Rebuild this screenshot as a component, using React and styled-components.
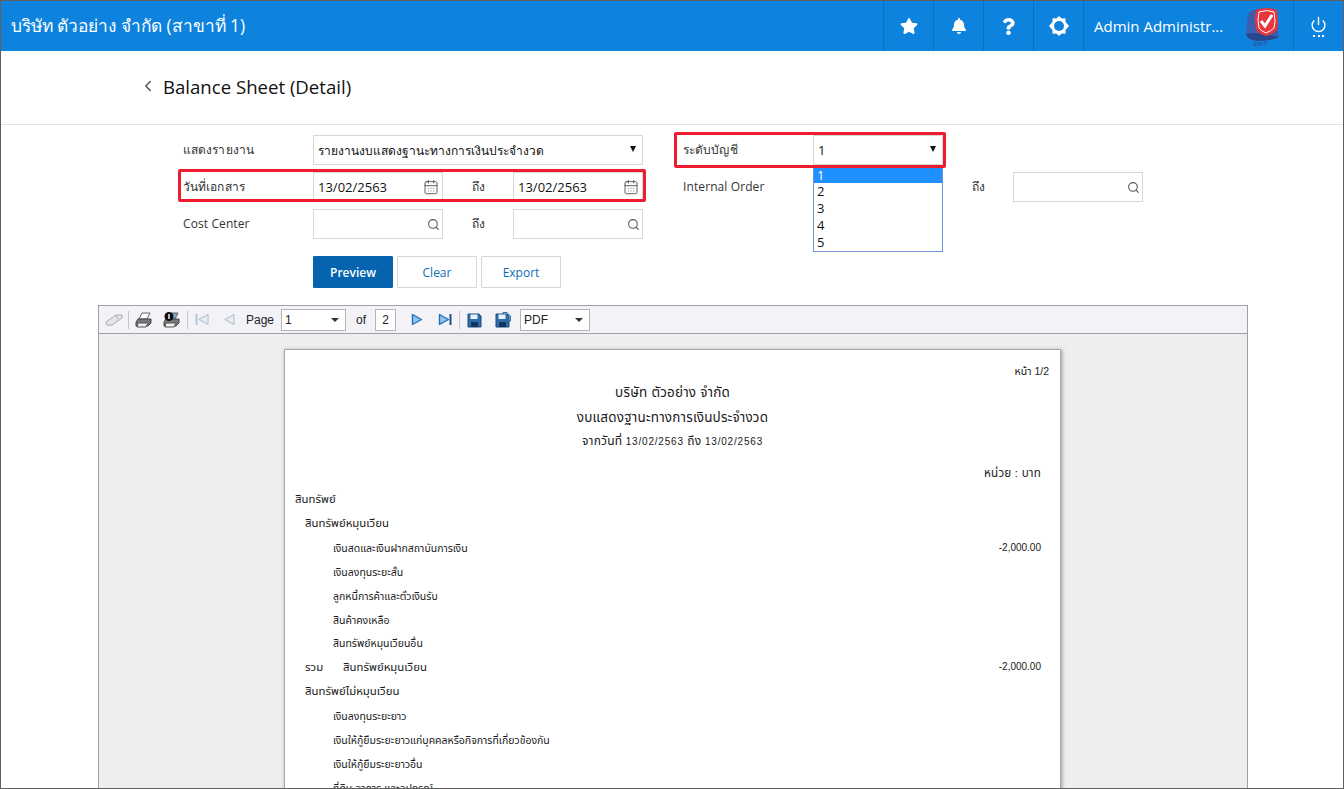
import React from 'react';
import styled, { createGlobalStyle } from 'styled-components';
import { FaStar, FaBell, FaQuestion } from 'react-icons/fa';
import { Search, CalendarDays, Power, ChevronLeft } from 'lucide-react';

const Global = createGlobalStyle`
  html, body { margin: 0; padding: 0; background: #fff; }
  body { font-family: "Open Sans", "Noto Sans", sans-serif; }
  * { box-sizing: border-box; }
`;

const Shell = styled.div`
  width: 1344px;
  height: 789px;
  border: 1px solid #5f5f5f;
  display: flex;
  flex-direction: column;
  overflow: hidden;
  background: #fff;
`;

const Header = styled.header`
  height: 50px;
  flex: none;
  background: #0e83de;
  color: #fff;
  display: flex;
  align-items: center;
`;

const Brand = styled.div`
  flex: 1;
  padding-left: 10px;
  font-size: 17.3px;
`;

const HeadCell = styled.div`
  width: 50px;
  height: 50px;
  border-left: 1px solid #0b6fbe;
  display: flex;
  align-items: center;
  justify-content: center;
`;

const UserCell = styled.div`
  width: 210px;
  height: 50px;
  border-left: 1px solid #0b6fbe;
  padding: 0 10px;
  display: flex;
  align-items: center;
  justify-content: space-between;
  font-size: 15px;
`;

const LogoWrap = styled.div`
  position: relative;
  width: 38px;
  height: 50px;
  span {
    position: absolute;
    left: 8px;
    top: 40px;
    font: 700 5px "Liberation Sans", sans-serif;
    color: #2c4f9a;
    letter-spacing: 0.2px;
  }
`;

const PowerWrap = styled.div`
  display: flex;
  flex-direction: column;
  align-items: center;
  gap: 2px;
  span { width: 11px; border-top: 2px dotted #fff; }
`;

const TitleBar = styled.div`
  height: 74px;
  flex: none;
  border-bottom: 1px solid #e2e2e2;
  padding: 0 0 3px 138px;
  display: flex;
  align-items: center;
  gap: 6px;
  color: #555;
  h1 { margin: 0; font-size: 18.6px; font-weight: 400; color: #111; }
`;

const FormArea = styled.section`
  position: relative;
  flex: none;
  padding: 10px 0 0 182px;
`;

const FormGrid = styled.div`
  display: grid;
  grid-template-columns: 130px 130px 70px 130px 40px 130px 130px 70px 130px;
  grid-auto-rows: 30px;
  row-gap: 7px;
  align-items: center;
  font-size: 12px;
  color: #333;
`;

const Label = styled.div`
  grid-column: ${(p) => p.$col};
  margin-top: -2px;
  letter-spacing: 0.1px;
`;

const Until = styled.div`
  grid-column: ${(p) => p.$col};
  text-align: center;
  margin-left: 1px;
  margin-top: -1px;
`;

const Field = styled.div`
  grid-column: ${(p) => p.$col};
  height: 30px;
  border: 1px solid #d8d8d8;
  background: #fff;
  display: flex;
  align-items: center;
  justify-content: ${(p) => (p.$end ? 'flex-end' : 'space-between')};
  padding: 0 ${(p) => (p.$end ? 2 : 3)}px 0 4px;
  font-size: 13px;
  color: #111;
  svg { color: #555; flex: none; }
`;

const ThaiValue = styled.span`
  font-size: 12px;
`;

const Arrow = styled.i`
  width: 0;
  height: 0;
  border-left: 3.5px solid transparent;
  border-right: 3.5px solid transparent;
  border-top: 6px solid #111;
  margin: -2px 3px 0 0;
`;

const Actions = styled.div`
  display: flex;
  gap: 4px;
  margin: 17px 0 0 130px;
`;

const Btn = styled.button`
  width: 80px;
  height: 32px;
  border-radius: 1px;
  font: 400 12px "Open Sans", sans-serif;
  font-weight: ${(p) => (p.$primary ? 600 : 400)};
  color: ${(p) => (p.$primary ? '#fff' : '#0b6cb8')};
  background: ${(p) => (p.$primary ? '#0563b0' : '#fff')};
  border: 1px solid ${(p) => (p.$primary ? '#0563b0' : '#d8d8d8')};
`;

const RedBox = styled.div`
  position: absolute;
  left: ${(p) => p.$x}px;
  top: ${(p) => p.$y}px;
  width: ${(p) => p.$w}px;
  height: ${(p) => p.$h}px;
  border: 3px solid #ee1c2e;
  border-radius: 2px;
  pointer-events: none;
`;

const ListBox = styled.ul`
  position: absolute;
  left: 812px;
  top: 41px;
  width: 130px;
  height: 86px;
  margin: 0;
  padding: 1px 0 0;
  list-style: none;
  background: #fff;
  border: 1px solid #6f94d8;
  font-size: 13px;
  color: #111;
`;

const ListItem = styled.li`
  height: ${(p) => (p.$on ? 15 : 16.9)}px;
  line-height: ${(p) => (p.$on ? 15 : 16.9)}px;
  padding-left: 3px;
  background: ${(p) => (p.$on ? '#1e90ff' : 'transparent')};
  color: ${(p) => (p.$on ? '#fff' : '#111')};
`;

const Viewer = styled.div`
  flex: 1;
  min-height: 0;
  margin: 17px 0 0 97px;
  width: 1150px;
  border: 1px solid #a0a0a8;
  border-bottom: 0;
  background: #eeeeee;
  display: flex;
  flex-direction: column;
`;

const Toolbar = styled.div`
  height: 28px;
  flex: none;
  background: #f3f3f7;
  border-bottom: 1px solid #a0a0a8;
  display: flex;
  align-items: center;
  padding-left: 6px;
  font: 12px "Liberation Sans", sans-serif;
  color: #222;
`;

const Tool = styled.svg`
  flex: none;
  margin-left: ${(p) => p.$ml || 0}px;
`;

const Sep = styled.i`
  width: 1px;
  height: 18px;
  background: #c4c4cc;
  margin-left: ${(p) => p.$ml}px;
`;

const ToolText = styled.span`
  margin-left: ${(p) => p.$ml}px;
`;

const ToolSelect = styled.div`
  margin-left: ${(p) => p.$ml}px;
  width: ${(p) => p.$w}px;
  height: 22px;
  background: #fff;
  border: 1px solid #b4b4bc;
  display: flex;
  align-items: center;
  justify-content: ${(p) => (p.$box ? 'center' : 'space-between')};
  padding: ${(p) => (p.$box ? 0 : '0 6px 0 3px')};
  i {
    border-left: 4px solid transparent;
    border-right: 4px solid transparent;
    border-top: 4px solid #333;
  }
`;

const Paper = styled.div`
  margin: 15px 0 0 185px;
  width: 777px;
  flex: 1;
  background: #fff;
  border: 1px solid #a8a8a8;
  border-bottom: 0;
  box-shadow: 1px 1px 4px #999;
  padding-top: 13px;
  font: 11px "Liberation Sans", "Noto Sans Thai", sans-serif;
  color: #1a1a1a;
`;

const PageNo = styled.div`
  height: 16px;
  line-height: 16px;
  text-align: right;
  padding-right: 11px;
  font-size: 10.5px;
`;

const Heading = styled.div`
  height: ${(p) => p.$h}px;
  line-height: ${(p) => p.$h}px;
  text-align: center;
  font-size: ${(p) => p.$size || 13.5}px;
  letter-spacing: 0.2px;
`;

const DateSpan = styled.span`
  font-size: 10px;
  letter-spacing: 0.8px;
`;

const Row = styled.div`
  height: ${(p) => p.$h || 24}px;
  line-height: ${(p) => p.$h || 24}px;
  display: flex;
  justify-content: space-between;
  padding: 0 19px 0 ${(p) => 10 + (p.$level || 0)}px;
  font-size: ${(p) => (p.$level > 10 ? 10.5 : 11.4)}px;
  white-space: nowrap;
`;

const UnitRow = styled(Row)`
  margin: 8px 0 2px;
  justify-content: flex-end;
  font-size: 11.6px;
  letter-spacing: 0.2px;
`;

const Amount = styled.span`
  font-size: 10px;
`;

const TotalLabel = styled.span`
  display: inline-block;
  width: 38px;
`;

const Logo = () => (
  <LogoWrap>
    <svg width="38" height="42" viewBox="0 0 38 42">
      <path d="M3 12 Q8 8 14 8 L30 8 L34 36 Q26 40 14 40 Q3 40 1 33 Z" fill="#3a5fae" />
      <path d="M1 33 Q12 30 34 36 Q26 40 14 40 Q3 40 1 33 Z" fill="#28468f" />
      <path d="M11 9 Q22 5 32 9 Q34 22 32 29 Q28 33 21 35 Q13 33 11 28 Q9 18 11 9 Z" fill="#e8343c" />
      <path d="M14 11 Q22 8 29 11 Q31 21 29 27 Q26 30 21 32 Q16 30 14 27 Q12 19 14 11 Z" fill="none" stroke="#fff" strokeWidth="1" />
      <path d="M16 20 L20 25 L27 14" fill="none" stroke="#fff" strokeWidth="3" />
    </svg>
    <span>SOFT</span>
  </LogoWrap>
);

const Gear = () => (
  <svg width="20" height="20" viewBox="0 0 20 20">
    <path d="M10 0 L12.6 2.6 L16.4 2.3 L16.6 6 L20 10 L16.6 14 L16.4 17.7 L12.6 17.4 L10 20 L7.4 17.4 L3.6 17.7 L3.4 14 L0 10 L3.4 6 L3.6 2.3 L7.4 2.6 Z" fill="#fff" />
    <circle cx="10" cy="10" r="5" fill="#0e83de" />
  </svg>
);

const Eraser = () => (
  <Tool width="18" height="14" viewBox="0 0 18 14">
    <path d="M1 9 L11 2 L17 2 L17 5 L7 12 L2 12 Z" fill="#e6e6e6" stroke="#aaa" />
    <path d="M11 2 L13 6" stroke="#aaa" fill="none" />
  </Tool>
);

const Printer = ({ ml, badge }) => (
  <Tool width="18" height="16" viewBox="0 0 18 16" $ml={ml}>
    <path d="M7 1 L15 1 L12 7 L4 7 Z" fill={badge ? '#7fa9cc' : '#fff'} stroke="#567" />
    <path d="M3 7 L16 7 L16 11 L13 14 L1 14 L1 10 Z" fill="#777" stroke="#444" />
    <path d="M3 11 L13 11 L11 15 L2 15 Z" fill="#eee" stroke="#555" />
    {badge && <circle cx="6" cy="4.5" r="4.5" fill="#111" />}
    {badge && <path d="M6 2 L6 7" stroke="#fff" strokeWidth="1.4" />}
  </Tool>
);

const Step = ({ ml, dir, bar, on }) => {
  const stroke = on ? '#2a6fb5' : '#b8c4d2';
  const fill = on ? '#8cc4ee' : '#e8eef4';
  const w = bar ? 14 : 12;
  return (
    <Tool width={w} height="13" viewBox={`0 0 ${w} 13`} $ml={ml}>
      {dir === 'r' ? (
        <>
          <path d="M1.5 1.5 L10.5 6.5 L1.5 11.5 Z" fill={fill} stroke={stroke} strokeWidth="1.4" strokeLinejoin="round" />
          {bar && <path d="M12.5 1 L12.5 12" stroke="#1f4f86" strokeWidth="2" />}
        </>
      ) : (
        <>
          {bar && <path d="M1.5 1 L1.5 12" stroke={stroke} strokeWidth="2" />}
          <path d={bar ? 'M13 1.5 L4 6.5 L13 11.5 Z' : 'M11 1.5 L2 6.5 L11 11.5 Z'} fill={fill} stroke={stroke} strokeWidth="1.2" strokeLinejoin="round" />
        </>
      )}
    </Tool>
  );
};

const Floppy = ({ ml, extra }) => (
  <Tool width="16" height="16" viewBox="0 0 16 16" $ml={ml}>
    {extra && <path d="M8 0.5 L12 0.5 L15.5 4 L15.5 9 L8 9 Z" fill="#dfe8f2" stroke="#3a6ea5" />}
    <path d="M1 2 L12 2 L14 4 L14 15 L1 15 Z" fill="#2f6cab" stroke="#1c4c80" />
    <path d="M3.5 2.5 L10.5 2.5 L10.5 7 L3.5 7 Z" fill="#e8f0f8" />
    <path d="M4 10 L11 10 L11 15 L4 15 Z" fill="#12365e" />
  </Tool>
);

const rows = [
  { t: 'สินทรัพย์', level: 0 },
  { t: 'สินทรัพย์หมุนเวียน', level: 10, h: 25 },
  { t: 'เงินสดและเงินฝากสถาบันการเงิน', level: 38, v: '-2,000.00' },
  { t: 'เงินลงทุนระยะสั้น', level: 38 },
  { t: 'ลูกหนี้การค้าและตั๋วเงินรับ', level: 38 },
  { t: 'สินค้าคงเหลือ', level: 38 },
  { t: 'สินทรัพย์หมุนเวียนอื่น', level: 38, h: 23 },
  { t: 'สินทรัพย์หมุนเวียน', level: 10, total: true, v: '-2,000.00' },
  { t: 'สินทรัพย์ไม่หมุนเวียน', level: 10, h: 25 },
  { t: 'เงินลงทุนระยะยาว', level: 38 },
  { t: 'เงินให้กู้ยืมระยะยาวแก่บุคคลหรือกิจการที่เกี่ยวข้องกัน', level: 38 },
  { t: 'เงินให้กู้ยืมระยะยาวอื่น', level: 38 },
  { t: 'ที่ดิน อาคาร และอุปกรณ์', level: 38 },
];

export default function App() {
  return (
    <>
      <Global />
      <Shell>
        <Header>
          <Brand>บริษัท ตัวอย่าง จำกัด (สาขาที่ 1)</Brand>
          <HeadCell><FaStar size={18} /></HeadCell>
          <HeadCell><FaBell size={16} /></HeadCell>
          <HeadCell><FaQuestion size={17} /></HeadCell>
          <HeadCell><Gear /></HeadCell>
          <UserCell>
            <span>Admin Administr...</span>
            <Logo />
          </UserCell>
          <HeadCell>
            <PowerWrap>
              <Power size={17} strokeWidth={2} />
              <span />
            </PowerWrap>
          </HeadCell>
        </Header>

        <TitleBar>
          <ChevronLeft size={18} strokeWidth={2} />
          <h1>Balance Sheet (Detail)</h1>
        </TitleBar>

        <FormArea>
          <FormGrid>
            <Label $col="1">แสดงรายงาน</Label>
            <Field $col="2 / 5"><ThaiValue>รายงานงบแสดงฐานะทางการเงินประจำงวด</ThaiValue><Arrow /></Field>
            <Label $col="6">ระดับบัญชี</Label>
            <Field $col="7">1<Arrow /></Field>

            <Label $col="1">วันที่เอกสาร</Label>
            <Field $col="2">13/02/2563<CalendarDays size={16} strokeWidth={1.4} /></Field>
            <Until $col="3">ถึง</Until>
            <Field $col="4">13/02/2563<CalendarDays size={16} strokeWidth={1.4} /></Field>
            <Label $col="6">Internal Order</Label>
            <Field $col="7" />
            <Until $col="8">ถึง</Until>
            <Field $col="9" $end><Search size={13} /></Field>

            <Label $col="1">Cost Center</Label>
            <Field $col="2" $end><Search size={13} /></Field>
            <Until $col="3">ถึง</Until>
            <Field $col="4" $end><Search size={13} /></Field>
          </FormGrid>

          <Actions>
            <Btn $primary>Preview</Btn>
            <Btn>Clear</Btn>
            <Btn>Export</Btn>
          </Actions>

          <ListBox>
            {[1, 2, 3, 4, 5].map((n) => (
              <ListItem key={n} $on={n === 1}>{n}</ListItem>
            ))}
          </ListBox>
          <RedBox $x={177} $y={44} $w={468} $h={33} />
          <RedBox $x={673} $y={7} $w={272} $h={36} />
        </FormArea>

        <Viewer>
          <Toolbar>
            <Eraser />
            <Sep $ml={5} />
            <Printer ml={6} />
            <Printer ml={10} badge />
            <Sep $ml={6} />
            <Step ml={7} dir="l" bar />
            <Step ml={14} dir="l" />
            <ToolText $ml={11}>Page</ToolText>
            <ToolSelect $ml={7} $w={65}>1<i /></ToolSelect>
            <ToolText $ml={10}>of</ToolText>
            <ToolSelect $ml={9} $w={21} $box>2</ToolSelect>
            <Step ml={15} dir="r" on />
            <Step ml={15} dir="r" bar on />
            <Sep $ml={7} />
            <Floppy ml={7} />
            <Floppy ml={12} extra />
            <ToolSelect $ml={9} $w={70}>PDF<i /></ToolSelect>
          </Toolbar>
          <Paper>
            <PageNo>หน้า 1/2</PageNo>
            <Heading $h={28}>บริษัท ตัวอย่าง จำกัด</Heading>
            <Heading $h={22}>งบแสดงฐานะทางการเงินประจำงวด</Heading>
            <Heading $h={24} $size={12}>จากวันที่ <DateSpan>13/02/2563</DateSpan> ถึง <DateSpan>13/02/2563</DateSpan></Heading>
            <UnitRow>หน่วย : บาท</UnitRow>
            {rows.map((r) => (
              <Row key={r.t + r.level + (r.total ? 't' : '')} $level={r.level} $h={r.h}>
                <span>{r.total && <TotalLabel>รวม</TotalLabel>}{r.t}</span>
                {r.v && <Amount>{r.v}</Amount>}
              </Row>
            ))}
          </Paper>
        </Viewer>
      </Shell>
    </>
  );
}
